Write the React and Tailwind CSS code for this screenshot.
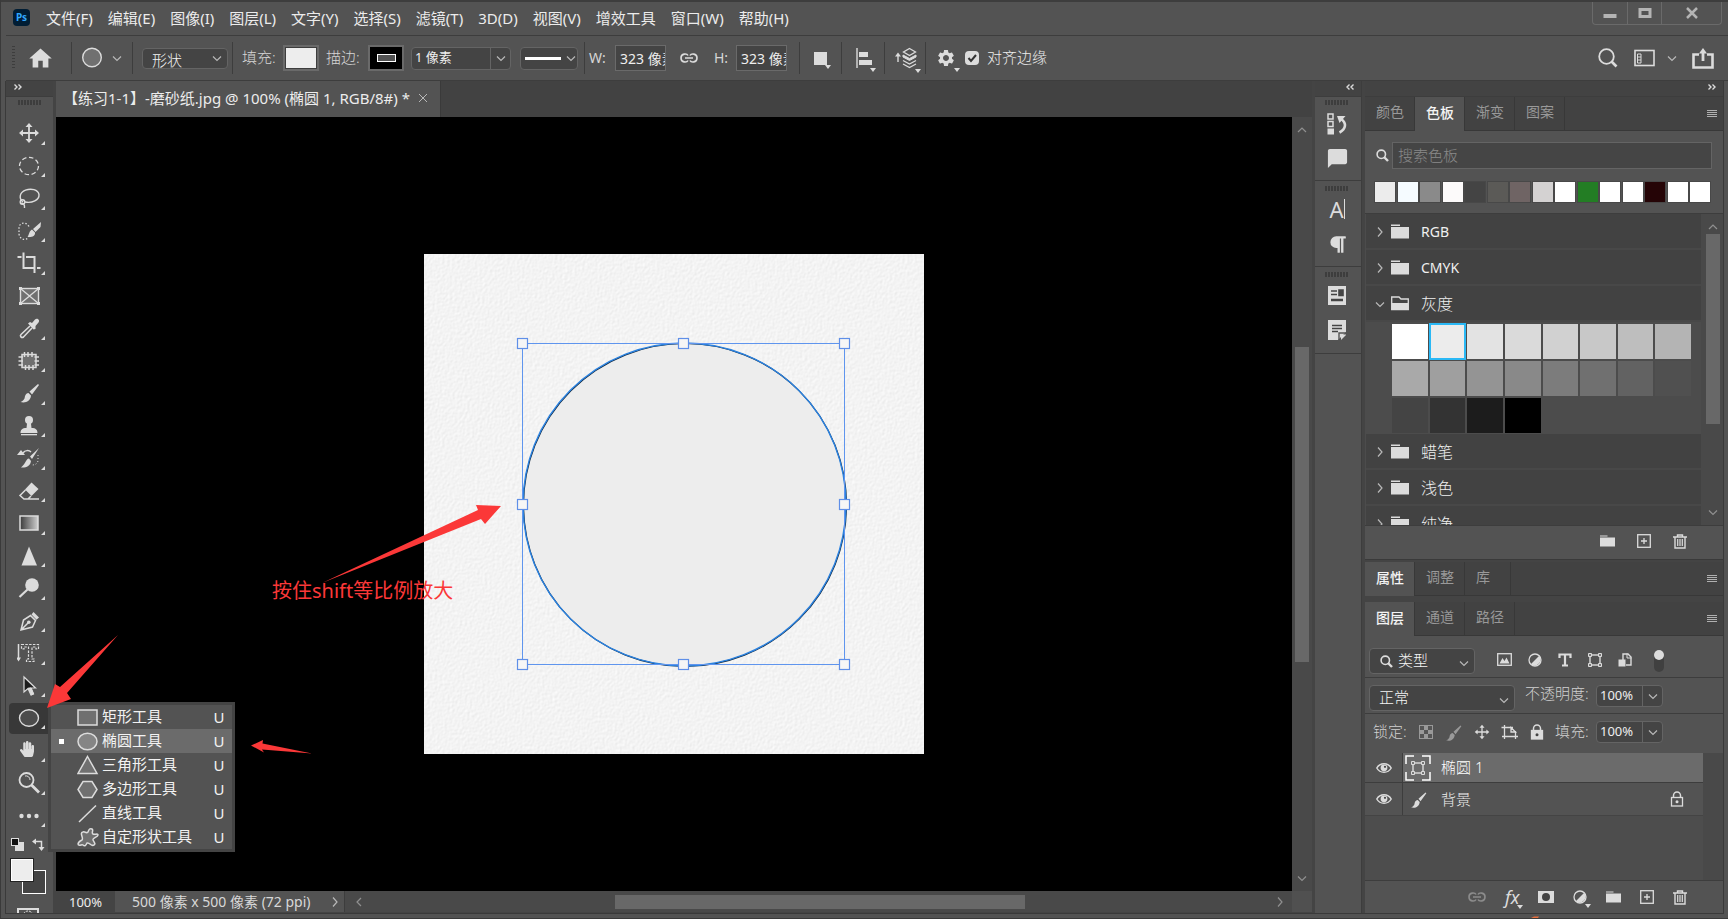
import React from "react";
import { MdHome, MdSettings, MdModeComment } from "react-icons/md";
import { FaHandPaper, FaParagraph } from "react-icons/fa";

const C = "#dcdcdc";

function Icon({ w = 24, h = 24, children, className = "" }) {
  return (
    <svg width={w} height={h} viewBox={`0 0 ${w} ${h}`} fill="none" stroke={C} className={`shrink-0 ${className}`} aria-hidden="true">
      {children}
    </svg>
  );
}

const Chevron = ({ dir = "down", color = "#b8b8b8", className = "" }) => {
  const d = {
    down: "M2 4.5 L6 8.5 L10 4.5",
    up: "M2 8 L6 4 L10 8",
    right: "M4 1.5 L8 6 L4 10.5",
    left: "M8 2 L4 6 L8 10",
  }[dir];
  return (
    <svg width="12" height="12" viewBox="0 0 12 12" fill="none" stroke={color} strokeWidth="1.2" className={`shrink-0 ${className}`} aria-hidden="true">
      <path d={d} />
    </svg>
  );
};

const DoubleChevron = ({ left }) => (
  <svg width="9" height="6" viewBox="0 0 9 6" fill="none" stroke={C} strokeWidth="1.4" aria-hidden="true">
    {left ? <path d="M3.500 0.500 L1 3 L3.500 5.500 M7.500 0.500 L5 3 L7.500 5.500" /> : <path d="M1.500 0.500 L4 3 L1.500 5.500 M5.500 0.500 L8 3 L5.500 5.500" />}
  </svg>
);

const Grip = () => (
  <svg width="24" height="5" viewBox="0 0 24 5" stroke="#3d3d3d" strokeWidth="5" strokeDasharray="2 1" className="mx-auto" aria-hidden="true">
    <path d="M0 2.5 H24" />
  </svg>
);

const brush = "M21 3 L12.5 10.5 L15 13.5 L22 4 Z M11.5 12 C8 12.5 8 15.5 7.500 17.5 C6.500 19.5 5 20.500 3.500 21 C8 22.500 13.500 20.500 14 14.500 Z";

const TOOLS = [
  ["移动工具", <g key="i" strokeWidth="1.800"><path d="M12 4 V20 M4 12 H20" /><path d="M12 2 L15.500 6 H8.500 Z M12 22 L15.500 18 H8.500 Z M2 12 L6 8.500 V15.500 Z M22 12 L18 8.500 V15.500 Z" fill={C} stroke="none" /></g>],
  ["椭圆选框工具", <ellipse key="i" cx="12" cy="12" rx="9.500" ry="8.700" strokeWidth="1.300" strokeDasharray="4.500 2.600" />],
  ["套索工具", <g key="i" strokeWidth="1.400"><path d="M6 16 C1.500 12.500 2.500 6.500 8.500 4.200 C14 2 21 3.500 22 8.500 C22.500 14 15 17.500 8 16" /><circle cx="5.500" cy="16" r="2.300" /><path d="M3.500 17.500 C6 16.500 8 18.500 7.500 22" /></g>],
  ["快速选择工具", <g key="i"><path d="M12 7.500 C9 2.500 3 3.500 2 8 V15 C3 20.500 8 22 12 18.500" strokeWidth="1.300" strokeDasharray="1.500 1.800" /><path d="M24 3 L16 10 L18.500 13 L23.500 8 Z M15 10.500 C12 12 12.500 15 10.500 18 C15 18.500 18.500 17 18 13.500 Z" fill={C} stroke="none" /></g>],
  ["裁剪工具", <g key="i" strokeWidth="2"><path d="M6.500 1.500 V17 H18 M20 17 H23.500 M0.500 6 H4.500 M9 6 H17.500 V22" /></g>],
  ["图框工具", <g key="i"><rect x="3.500" y="4.500" width="18" height="15" fill="#707070" strokeWidth="1.400" /><path d="M3.500 4.500 L21.500 19.500 M21.500 4.500 L3.500 19.500" strokeWidth="1.300" /><path d="M2 3 h3 v3 h-3z M20 3 h3 v3 h-3z M2 18 h3 v3 h-3z M20 18 h3 v3 h-3z" fill={C} stroke="none" /></g>],
  ["吸管工具", <g key="i"><path d="M13 10 L4 18.500 C2.500 20 4.500 22.500 6.500 21 L15 12" strokeWidth="1.600" /><path d="M11 7.500 L13 6 L15 7 L18 3.500 C20 1.500 23.500 4 21.500 6.500 L18.500 10 L18.500 13 L16.500 13.500 Z" fill={C} stroke="none" /></g>],
  ["修补工具", <g key="i" strokeWidth="1.500"><path d="M5 5.500 H19 V18.500 H5 Z" fill="#707070" /><path d="M7.500 3 V8 M11 3 V8 M15 3 V8 M8.500 16 V21 M12 16 V21 M16 16 V21 M1.500 8 H6 M1.500 12 H6 M1.500 16 H6 M17.500 8 H22 M17.500 12 H22 M17.500 16 H22" /></g>],
  ["画笔工具", <path key="i" d={brush} fill={C} stroke="none" />],
  ["仿制图章工具", <g key="i" fill={C} stroke="none"><circle cx="12" cy="6" r="4" /><path d="M10.200 8 H13.800 L14.500 14 C19 14 20.500 16 20.500 19 H3.500 C3.500 16 5 14 9.500 14 Z" /><rect x="4" y="20" width="16" height="1.300" /></g>],
  ["历史记录画笔工具", <g key="i"><path d="M22 2 L13 10.500 L15 13 Z M12 12.500 C8.500 13 9.500 17 4 21.500 C9 22 13.500 20 14 15 Z M0 9 L4 4 L8 9 Z" fill={C} stroke="none" /><path d="M6 7 C8 4 12 4 14 6" strokeWidth="1.500" /><path d="M21 9 V15 C20 18 18 19 15 19" strokeDasharray="1 2" /></g>],
  ["橡皮擦工具", <g key="i"><path d="M14.500 3.500 L21.500 10 L14.500 17 L8 10.500 Z" fill={C} stroke="none" /><path d="M8.500 11 L3 16.500 L7 20 H11 L14 17 M7 20 H22" strokeWidth="1.500" /></g>],
  ["渐变工具", <g key="i"><defs><linearGradient id="toolGradient"><stop offset="0" stopColor="#3a3a3a" /><stop offset="1" stopColor="#cfcfcf" /></linearGradient></defs><rect x="3" y="5" width="18" height="14" fill="url(#toolGradient)" strokeWidth="1.500" /></g>],
  ["锐化工具", <path key="i" d="M12 2.500 L20 21.500 H4.500 Z" fill={C} stroke="none" />],
  ["减淡工具", <g key="i"><circle cx="15" cy="9" r="6.800" fill={C} stroke="none" /><path d="M10.500 13.500 L2.500 21" strokeWidth="2.200" /></g>],
  ["钢笔工具", <g key="i"><path d="M4 21 L6.500 11 L13.500 6.500 L18.500 11.500 L15.500 18 Z M4 21 L11 14" strokeWidth="1.500" /><circle cx="11.800" cy="13.200" r="1.800" fill={C} stroke="none" /><path d="M14.500 5.500 L16.500 3 L22 8.500 L19.500 10.800 Z" fill={C} stroke="none" /></g>],
  ["直排文字蒙版工具", <g key="i"><path d="M1.500 3 V19" strokeWidth="1.500" /><path d="M-1 16.500 H4 L1.500 20.500 Z" fill={C} stroke="none" /><path d="M4.500 3.500 H21.500 V8 H19 V6 H15 V18 H17 V20.500 H9.500 V18 H11.500 V6 H7 V8 H4.500 Z" strokeDasharray="2.500 1.300" strokeWidth="1.200" /></g>],
  ["路径选择工具", <g key="i"><path d="M7 3 V18 L11 14.500 L14 21 L16.500 20 L14 14 H18.500 Z" fill="#1c1c1c" strokeWidth="1.200" /><path d="M11.500 14 L14.500 21 L16.500 20 L14 14 Z" fill={C} /></g>],
  ["椭圆工具", <ellipse key="i" cx="12" cy="12" rx="9.500" ry="8.200" fill="#4c4c4c" strokeWidth="1.400" />],
  ["抓手工具", <FaHandPaper key="i" x="2" y="2" width="20" height="20" color={C} />],
  ["缩放工具", <g key="i"><circle cx="9.500" cy="9" r="7" strokeWidth="1.800" /><path d="M14.500 14 L22 21.500" strokeWidth="2.800" /><path d="M8 5 A4 4 0 0 1 13 9" /></g>],
  ["编辑工具栏", <g key="i" fill={C} stroke="none"><circle cx="4.500" cy="12" r="2.200" /><circle cx="12" cy="12" r="2.200" /><circle cx="19.500" cy="12" r="2.200" /></g>],
];

const MENUS = ["文件(F)", "编辑(E)", "图像(I)", "图层(L)", "文字(Y)", "选择(S)", "滤镜(T)", "3D(D)", "视图(V)", "增效工具", "窗口(W)", "帮助(H)"];

const Sep = () => <div className="h-8 w-px shrink-0 bg-[#3d3d3d]" />;

const Corner = () => (
  <svg width="6" height="4" viewBox="0 0 6 4" className="absolute -right-1 -bottom-1" aria-hidden="true"><path d="M0 0 H6 L3 4 Z" fill={C} /></svg>
);

function Select({ label, value, className = "", children, pad = "pl-[9px]" }) {
  return (
    <div className={`relative shrink-0 rounded-sm border border-[#646464] bg-[#444] ${className}`}>
      {children}
      <select aria-label={label} className={`h-full w-full appearance-none bg-transparent pb-[3px] text-[15px] leading-4 font-light text-[#f4f4f4] outline-none ${pad}`}>
        <option>{value}</option>
      </select>
      <Chevron className="pointer-events-none absolute right-1 bottom-1" />
    </div>
  );
}

function Combo({ id, value, className = "" }) {
  return (
    <div className={`flex shrink-0 rounded-sm border border-[#646464] bg-[#444] ${className}`}>
      <input id={id} aria-label={id} defaultValue={value} className="w-0 min-w-0 flex-1 bg-transparent pl-[3px] text-[13px] text-[#eee] outline-none" />
      <button aria-label="展开" className="flex w-5 items-center justify-center border-l border-[#646464]"><Chevron /></button>
    </div>
  );
}

function MenuBar() {
  return (
    <header className="flex h-[35px] shrink-0 items-start border-t-2 border-[#3d3d3d] pl-3">
      <div className="mt-[7px] flex h-[17px] w-[17px] items-center justify-center rounded bg-[#001d34] text-[10px] font-bold text-[#31a8ff]">Ps</div>
      <nav className="ml-4 flex h-8 items-center gap-[15px] text-[15px] text-[#ececec]">
        {MENUS.map((m) => <button key={m} className="whitespace-nowrap">{m}</button>)}
      </nav>
      <div className="mr-[6px] ml-auto flex h-[23px] rounded-b border border-t-0 border-[#6a6a6a]">
        <button aria-label="最小化" className="flex w-[35px] items-center justify-center border-r border-[#6a6a6a]">
          <Icon w={14} h={12}><path d="M0.500 9 H13.500" stroke="#b4b4b4" strokeWidth="4" /></Icon>
        </button>
        <button aria-label="最大化" className="flex w-[34px] items-center justify-center border-r border-[#6a6a6a]">
          <Icon w={14} h={12}><rect x="2" y="2.500" width="10" height="7" stroke="#b4b4b4" strokeWidth="3" /></Icon>
        </button>
        <button aria-label="关闭" className="flex w-[59px] items-center justify-center">
          <Icon w={14} h={12}><path d="M2 1 L12 11 M12 1 L2 11" stroke="#b4b4b4" strokeWidth="2.500" /></Icon>
        </button>
      </div>
    </header>
  );
}

const LinkIcon = ({ color = C }) => (
  <Icon w={18} h={12}><g stroke={color} strokeWidth="1.600"><path d="M8 3.500 C7 1.500 1 1 1 6 C1 11 7 10.500 8 8.500 M10 3.500 C11 1.500 17 1 17 6 C17 11 11 10.500 10 8.500 M5 6 H13" /></g></Icon>
);

function OptionsBar() {
  return (
    <div className="ml-[5px] flex h-[46px] shrink-0 items-center border-y border-[#3d3d3d] pr-[14px] pl-[6px] text-[15px] text-[#d6d6d6]">
      <svg width="3" height="24" stroke="#3d3d3d" strokeWidth="3" strokeDasharray="1 2" aria-hidden="true"><path d="M1.500 0 V24" /></svg>
      <button aria-label="主页" className="ml-3"><MdHome size={27} color={C} /></button>
      <div className="ml-[17px]"><Sep /></div>
      <button aria-label="椭圆工具预设" className="ml-[9px] flex items-center">
        <Icon w={22} h={22}><circle cx="11" cy="10.500" r="9.300" fill="#707070" strokeWidth="1.400" /></Icon>
      </button>
      <Chevron className="ml-[8px]" />
      <div className="mr-[9px] ml-[9px]"><Sep /></div>
      <Select label="工具模式" value="形状" className="h-[21px] w-[86px]" />
      <div className="mr-[9px] ml-1"><Sep /></div>
      <span className="w-[41px] pb-[2px] font-light">填充:</span>
      <button aria-label="填充颜色" className="h-[26px] w-9 border-2 border-[#6a6a6a] bg-[#ededed] outline-1 -outline-offset-3 outline-[#3d3d3d]" />
      <span className="ml-[7px] w-[42px] pb-[2px] font-light">描边:</span>
      <button aria-label="描边颜色" className="flex h-[26px] w-9 items-center justify-center border-2 border-[#6a6a6a] bg-black">
        <span className="h-2 w-[19px] border border-white bg-[#535353]" />
      </button>
      <Combo id="描边宽度" value="1 像素" className="ml-[7px] h-[23px] w-[100px]" />
      <div className="ml-[9px] flex h-[23px] w-[58px] items-center rounded-sm border border-[#646464] bg-[#444] pl-1">
        <button aria-label="描边类型" className="flex w-full items-center gap-1"><span className="h-[3px] w-9 bg-white" /><Chevron /></button>
      </div>
      <div className="mr-1 ml-[6px]"><Sep /></div>
      <label htmlFor="shape-w" className="w-[26px] text-sm">W:</label>
      <input id="shape-w" defaultValue="323 像素" className="h-[26px] w-[51px] border border-[#6a6a6a] bg-[#444] pl-1 text-sm text-[#eee]" />
      <button aria-label="链接宽高" className="mx-[14px]"><LinkIcon /></button>
      <label htmlFor="shape-h" className="ml-[2px] w-[22px] text-sm">H:</label>
      <input id="shape-h" defaultValue="323 像素" className="h-[26px] w-[51px] border border-[#6a6a6a] bg-[#444] pl-1 text-sm text-[#eee]" />
      <div className="mr-[14px] ml-3"><Sep /></div>
      <button aria-label="路径操作" className="relative size-[13px] bg-[#dcdcdc]"><Corner /></button>
      <div className="mx-[14px]"><Sep /></div>
      <button aria-label="路径对齐方式" className="relative">
        <Icon w={16} h={20}><path d="M1 0 V20" strokeWidth="1.400" /><path d="M3 4 h9 v5 h-9z M3 12 h13 v5 h-13z" fill={C} stroke="none" /></Icon><Corner />
      </button>
      <div className="mr-[10px] ml-3"><Sep /></div>
      <button aria-label="路径排列方式" className="relative">
        <Icon w={22} h={22}><path d="M3 8 V15" strokeWidth="1.400" /><path d="M3 5.500 L6 9.500 H0 Z" fill={C} stroke="none" /><path d="M14.500 1.500 L20.500 5 L14.500 8.500 L8.500 5 Z" strokeWidth="1.300" /><path d="M8 8 L14.500 11.500 L21 8 L21 10 L14.500 13.500 L8 10 Z" fill={C} /><path d="M8 13.500 L14.500 17 L21 13.500 M8 17 L14.500 20.500 L21 17" strokeWidth="1.300" /></Icon><Corner />
      </button>
      <div className="mr-[10px] ml-2"><Sep /></div>
      <button aria-label="设置" className="relative"><MdSettings size={20} color={C} /><Corner /></button>
      <label className="ml-[9px] flex items-center gap-2 font-light whitespace-nowrap text-[#eee]">
        <span className="relative flex size-[14px]">
          <input type="checkbox" defaultChecked className="peer size-[14px] appearance-none rounded-sm bg-[#dcdcdc]" />
          <svg width="14" height="14" viewBox="0 0 14 14" className="pointer-events-none absolute inset-0 hidden peer-checked:block" aria-hidden="true"><path d="M3.500 7 L6 10 L11 4" fill="none" stroke="#333" strokeWidth="2" /></svg>
        </span>
        <span className="pb-[2px]">对齐边缘</span>
      </label>
      <div className="ml-auto flex items-center">
        <button aria-label="搜索"><Icon w={20} h={20}><circle cx="8.500" cy="8.500" r="7.300" strokeWidth="1.800" /><path d="M13.500 13.500 L18.500 18.500" strokeWidth="2.600" /></Icon></button>
        <button aria-label="选择工作区" className="ml-4"><Icon w={21} h={18}><rect x="1" y="1.500" width="19" height="15" strokeWidth="1.600" /><path d="M3.500 5 h3.500 v9 h-3.500z" /><path d="M3.500 8 h3.500 M3.500 11 h3.500" /></Icon></button>
        <Chevron className="ml-[11px]" />
        <button aria-label="共享" className="ml-[14px]"><Icon w={22} h={21}><path d="M7 6.500 H1.500 V19.500 H20.500 V6.500 H15" strokeWidth="2.600" /><path d="M11 13 V5" strokeWidth="2.800" /><path d="M11 0 L15 5.500 H7 Z" fill={C} stroke="none" /></Icon></button>
      </div>
    </div>
  );
}

const FLYOUT = [
  ["矩形工具", <rect key="s" x="1" y="3" width="19" height="15" />],
  ["椭圆工具", <ellipse key="s" cx="10.500" cy="10.500" rx="9.500" ry="8.300" />],
  ["三角形工具", <path key="s" d="M10.500 1.500 L20 18.500 H1 Z" />],
  ["多边形工具", <path key="s" d="M6 2.500 H15 L20 10.500 L15 18.500 H6 L1 10.500 Z" />],
  ["直线工具", <path key="s" d="M2 19 L19 2.500" />],
  ["自定形状工具", <path key="s" d="M6 5 C8 4 9 7 11 5 C12 2 13 1 15 2 C17 3 14 6 16 7 C18 8 21 6 21 8 C21 10 15 11 16 13 C17 15 19 17 17 18 C14 20 13 15 10 16 C9 18 8 20 6 18 C5 17 3 19 1.500 18 C0 16 3 14 5 13 C7 11 2 6 6 5 Z" />],
];

function Flyout() {
  return (
    <div role="menu" className="absolute top-0 left-[39px] z-20 w-[187px] border-[3px] border-[#444] bg-[#535353] text-[15px] text-[#f2f2f2]">
      {FLYOUT.map(([name, shape], i) => (
        <button key={name} role="menuitem" className={`flex h-6 w-full items-center pr-[7px] pl-2 ${i === 1 ? "bg-[#6b6b6b]" : ""}`}>
          <span className={`size-[5px] ${i === 1 ? "bg-white" : ""}`} />
          <Icon w={22} h={21} className="mr-[3px] ml-[13px]"><g fill={i === 1 ? "#858585" : "#707070"} strokeWidth="1.500">{shape}</g></Icon>
          <span className="pb-[2px] whitespace-nowrap">{name}</span>
          <span className="ml-auto w-3 text-center">U</span>
        </button>
      ))}
    </div>
  );
}

function Toolbar() {
  return (
    <aside className="flex w-[47px] shrink-0 flex-col bg-[#535353]">
      <div className="flex h-[15px] shrink-0 items-start bg-[#434343] pt-[3px] pl-[7px]"><DoubleChevron /></div>
      <div className="h-[21px] shrink-0 border-t border-[#3d3d3d] pt-[3px]"><Grip /></div>
      <div className="flex min-h-0 flex-1 flex-col">
        {TOOLS.map(([name, art], i) => (
          <div key={name} className="relative ml-[3px] flex min-h-0 flex-1">
            <button aria-label={name} className={`relative flex w-10 flex-1 items-center rounded-sm pl-2 ${i === 18 ? "my-px bg-[#383838]" : ""}`}>
              <Icon>{art}</Icon>
              {i !== 5 && <svg width="4" height="4" className="absolute right-2 bottom-[5px]" aria-hidden="true"><path d="M4 0 V4 H0 Z" fill={C} /></svg>}
            </button>
            {i === 18 && <Flyout />}
          </div>
        ))}
      </div>
      <div className="h-[81px] shrink-0 overflow-hidden">
        <div className="mt-[6px] flex justify-between pr-2 pl-[5px]">
          <button aria-label="默认前景色和背景色"><Icon w={13} h={13}><path d="M4 4 h9 v9 h-9z" fill={C} stroke="none" /><rect x="0.500" y="0.500" width="7" height="7" fill="#111" /></Icon></button>
          <button aria-label="切换前景色和背景色"><Icon w={13} h={13}><path d="M3 3.500 H9.500 V10" strokeWidth="1.500" /><path d="M0 3.500 L4 0.500 V6.500 Z M9.500 13 L6.500 9 H12.500 Z" fill={C} stroke="none" /></Icon></button>
        </div>
        <div className="grid grid-cols-[12px_12px_12px_1fr] grid-rows-[12px_12px_12px] pt-[7px] pl-1">
          <button aria-label="前景色" className="z-10 col-span-2 col-start-1 row-span-2 row-start-1 border border-[#222] bg-[#ededed] ring-1 ring-white ring-inset" />
          <button aria-label="背景色" className="col-span-2 col-start-2 row-span-2 row-start-2 border border-white bg-[#444]" />
        </div>
        <button aria-label="以快速蒙版模式编辑" className="mt-[14px] ml-[11px] block"><Icon w={22} h={16}><rect x="1" y="1" width="20" height="14" strokeWidth="2" /><circle cx="11" cy="8" r="5" strokeDasharray="2 1" /></Icon></button>
      </div>
    </aside>
  );
}

const HANDLES = [[98, 89], [259, 89], [420, 89], [98, 250], [420, 250], [98, 410], [259, 410], [420, 410]];

function Canvas() {
  return (
    <div className="relative flex min-w-0 flex-1 items-center justify-center overflow-hidden bg-black">
      <svg width="500" height="500" viewBox="0 0 500 500" className="shrink-0 overflow-visible" role="img" aria-label="画布">
        <defs>
          <filter id="paper" x="0" y="0" width="100%" height="100%" colorInterpolationFilters="sRGB">
            <feTurbulence type="fractalNoise" baseFrequency="0.4 0.35" numOctaves="2" seed="4" result="n" />
            <feDiffuseLighting in="n" surfaceScale="0.130" diffuseConstant="1.110" lightingColor="#fdfdfd">
              <feDistantLight azimuth="225" elevation="60" />
            </feDiffuseLighting>
          </filter>
        </defs>
        <rect width="500" height="500" fill="#f3f3f3" />
        <rect width="500" height="500" filter="url(#paper)" />
        <circle cx="261" cy="251" r="161.500" fill="#ededed" stroke="#10283f" strokeWidth="1.200" />
        <circle cx="260.500" cy="250.500" r="161.500" fill="none" stroke="#2b82e0" strokeWidth="1.400" />
        <rect x="98.500" y="89.500" width="322" height="321" fill="none" stroke="#5f95ee" strokeWidth="1" />
        {HANDLES.map(([x, y]) => <rect key={`${x}-${y}`} x={x - 4.5} y={y - 4.5} width="10" height="10" fill="#f6f6f6" stroke="#5f8fe8" strokeWidth="1.200" />)}
        <path d="M77 252 L52 251 L54 256 L-102 329 L57 265 L61 270 Z" fill="#fb3838" />
      </svg>
      <p className="absolute top-[460px] left-[216px] text-xl leading-7 whitespace-nowrap text-[#fb3838]">按住shift等比例放大</p>
      <svg width="64" height="16" viewBox="0 0 64 16" className="absolute top-[622px] left-[194px]" aria-hidden="true"><path d="M1 6.500 L13 1 L12.500 4.500 L62 14.500 L12 10.500 L14 13.500 Z" fill="#fb3838" /></svg>
    </div>
  );
}

function Document() {
  return (
    <main className="flex min-w-0 flex-1 flex-col">
      <div className="flex h-9 shrink-0 bg-[#424242]">
        <div className="flex items-center border-r border-[#3a3a3a] bg-[#535353] pr-3 pb-[2px] pl-[7px] text-[15px] text-[#ececec]">
          <span className="whitespace-nowrap">【练习1-1】-磨砂纸.jpg @ 100% (椭圆 1, RGB/8#) *</span>
          <button aria-label="关闭文档" className="ml-2"><Icon w={10} h={10}><path d="M1 1 L9 9 M9 1 L1 9" stroke="#b8b8b8" /></Icon></button>
        </div>
      </div>
      <div className="flex min-h-0 flex-1">
        <Canvas />
        <div className="flex w-5 shrink-0 flex-col items-center bg-[#494949] py-[7px]">
          <Chevron dir="up" color="#909090" />
          <div className="h-[211px]" />
          <div className="h-[315px] w-[14px] bg-[#686868]" />
          <Chevron color="#909090" className="mt-auto" />
        </div>
      </div>
      <div className="flex h-[22px] shrink-0 items-center border-b border-[#444] bg-[#494949] text-sm text-[#d8d8d8]">
        <input aria-label="缩放比例" defaultValue="100%" className="h-full w-[59px] bg-[#444] pl-[13px] text-[13px] text-[#eee]" />
        <div className="flex h-full w-[230px] items-center justify-between border-r border-[#3d3d3d] bg-[#535353] pr-[3px] pl-[17px]">
          <span className="whitespace-nowrap">500 像素 x 500 像素 (72 ppi)</span><Chevron dir="right" />
        </div>
        <Chevron dir="left" color="#909090" className="ml-2" />
        <div className="flex flex-1 justify-center"><div className="h-[14px] w-[410px] bg-[#686868]" /></div>
        <Chevron dir="right" color="#909090" className="mr-[6px]" />
        <div className="h-full w-5 bg-[#505050]" />
      </div>
    </main>
  );
}

function DockStrip() {
  return (
    <aside className="flex w-[47px] shrink-0 flex-col border-r border-[#3d3d3d] bg-[#535353]">
      <div className="flex h-[15px] items-start justify-end bg-[#434343] pt-[3px] pr-[6px]"><DoubleChevron left /></div>
      <div className="flex h-[85px] flex-col items-center border-y border-[#3d3d3d] pt-[3px] pr-[2px]">
        <Grip />
        <button aria-label="历史记录" className="mt-2"><Icon w={20} h={22}><path d="M1 1 h5 v5 h-5z M1 8.500 h5 v5 h-5z" strokeWidth="1.500" /><path d="M0.500 15.500 h6.500 v6 h-6.500z" fill={C} stroke="none" /><path d="M14 6 C20 10 19 16 12.500 19.500" strokeWidth="2.600" /><path d="M10 3 L18.500 3 L12.500 10 Z" fill={C} stroke="none" /></Icon></button>
        <button aria-label="注释" className="mt-3"><MdModeComment size={23} color={C} className="-scale-x-100" /></button>
      </div>
      <div className="flex h-[86px] flex-col items-center border-b border-[#3d3d3d] pt-[5px] pr-[2px]">
        <Grip />
        <button aria-label="字符" className="mt-[6px] flex h-6 items-center text-[22px] leading-6 text-[#dcdcdc]">A<span className="h-5 w-px bg-[#dcdcdc]" /></button>
        <button aria-label="段落" className="mt-[14px]"><FaParagraph size={19} color={C} /></button>
      </div>
      <div className="flex h-[87px] flex-col items-center border-b border-[#3d3d3d] pt-[5px] pr-[2px]">
        <Grip />
        <button aria-label="属性面板" className="mt-[9px]"><Icon w={18} h={19}><rect x="0.500" y="0.500" width="17" height="18" fill={C} /><path d="M3 5 H9 M3 8.500 H9 M11 4 h4 v5.500 h-4z" stroke="#444" strokeWidth="1.600" fill="#444" /><path d="M3 14 H15" stroke="#444" strokeWidth="2.500" /></Icon></button>
        <button aria-label="注释面板" className="mt-[15px]"><Icon w={18} h={20}><path d="M0 0 H18 V12 L10 20 H0 Z" fill={C} stroke="none" /><path d="M4 5.500 H14 M4 8.500 H14 M4 11.500 H10" stroke="#444" strokeWidth="1.300" /><path d="M18 13 H11 V20" stroke="#535353" strokeWidth="1.400" /><path d="M13 20 L18 15 V14.500 H13 Z" fill={C} stroke="none" /></Icon></button>
      </div>
    </aside>
  );
}

const Burger = () => <Icon w={10} h={8}><path d="M0 0.500 H10 M0 2.500 H10 M0 4.500 H10 M0 6.500 H10" stroke="#b0b0b0" strokeWidth="1" /></Icon>;

function Tabs({ items, active }) {
  return (
    <div role="tablist" className="flex h-[34px] shrink-0 items-stretch bg-[#424242] text-sm">
      {items.map((t, i) => (
        <button key={t} role="tab" aria-selected={i === active} className={`border-r border-[#383838] pb-[3px] pl-[11px] ${i === active ? "bg-[#535353] font-medium text-[#f4f4f4]" : "border-b text-[#999]"} ${t.length === 1 ? "pr-5" : "pr-[10px]"}`}>{t}</button>
      ))}
      <div className="flex flex-1 items-center justify-end border-b border-[#383838] pr-[6px]"><button aria-label="面板菜单"><Burger /></button></div>
    </div>
  );
}

const Folder = ({ open, w = 18, h = 15 }) => (
  <svg width={w} height={h} viewBox="0 0 18 15" preserveAspectRatio="none" className="shrink-0" aria-hidden="true">
    {open ? <><path d="M0.700 13.500 V1 H8 L10 3 H17.300 V13.500 Z" fill="#444" stroke={C} strokeWidth="1.300" /><path d="M0.500 7 H17.500 V14 H0.500 Z" fill={C} /></> : <><path d="M0 0.500 H9 V2 H0 Z M0 3 H18 V14.500 H0 Z" fill={C} /></>}
  </svg>
);
const Plus = () => <Icon w={14} h={14}><rect x="0.700" y="0.700" width="12.600" height="12.600" strokeWidth="1.300" /><path d="M7 4 V10 M4 7 H10" strokeWidth="1.300" /></Icon>;
const Trash = () => <Icon w={14} h={15}><path d="M0 3 H14 M4.500 3 V1 H9.500 V3 M2 3 V14 H12 V3" strokeWidth="1.400" /><path d="M4.700 5 V12 M7 5 V12 M9.300 5 V12" strokeWidth="1.200" /></Icon>;
const Magnifier = ({ className }) => <Icon w={13} h={13} className={className}><circle cx="5.300" cy="5.300" r="4.200" strokeWidth="1.600" /><path d="M8 8 L12 12" strokeWidth="2.400" /></Icon>;
const Adjust = () => <Icon w={14} h={14}><circle cx="7" cy="7" r="6" strokeWidth="1.300" /><path d="M11.200 2.800 A6 6 0 0 1 2.800 11.200 Z" fill={C} stroke="none" /></Icon>;
const ShapeBox = () => <Icon w={14} h={14}><rect x="2" y="2" width="10" height="10" strokeWidth="1.400" /><path d="M0.500 0.500 h3 v3 h-3z M10.500 0.500 h3 v3 h-3z M0.500 10.500 h3 v3 h-3z M10.500 10.500 h3 v3 h-3z" fill="#777" strokeWidth="1" /></Icon>;

const RECENT = ["bg-[#ececec]", "bg-[#f5fbff]", "bg-[#8a8a8a]", "bg-[#fcfafa]", "bg-[#444]", "bg-[#5b5a57]", "bg-[#6f6464]", "bg-[#d4d2d2]", "bg-white", "bg-[#237d24]", "bg-white", "bg-white", "bg-[#250406]", "bg-white", "bg-white"];
const GRAYS = ["bg-white", "bg-[#ececec]", "bg-[#e3e3e3]", "bg-[#dadada]", "bg-[#d1d1d1]", "bg-[#c8c8c8]", "bg-[#bebebe]", "bg-[#b4b4b4]", "bg-[#a9a9a9]", "bg-[#9f9f9f]", "bg-[#949494]", "bg-[#898989]", "bg-[#7c7c7c]", "bg-[#707070]", "bg-[#626262]", "bg-[#505050]", "bg-[#444]", "bg-[#333]", "bg-[#1c1c1c]", "bg-black"];

const Group = ({ name, open }) => (
  <button aria-expanded={!!open} className="flex h-9 w-full shrink-0 items-center border-b-2 border-[#484848] bg-[#424242] pt-px pl-2 text-[#f0f0f0]">
    <Chevron dir={open ? "down" : "right"} />
    <span className="mr-3 ml-[5px] flex"><Folder open={open} /></span>
    <span className={/^[A-Z]/.test(name) ? "text-sm" : "text-base font-light"}>{name}</span>
  </button>
);

function SwatchesPanel() {
  return (
    <section className="flex shrink-0 flex-col border-b border-[#3a3a3a] bg-[#535353]">
      <Tabs items={["颜色", "色板", "渐变", "图案"]} active={1} />
      <label className="flex items-center gap-[3px] pt-[11px] pr-[11px] pl-[11px]">
        <Magnifier />
        <input placeholder="搜索色板" className="h-[27px] min-w-0 flex-1 border border-[#646464] bg-[#454545] pb-px pl-[5px] text-[15px] font-light placeholder:text-[#8a8a8a]" />
      </label>
      <div className="mt-[13px] mb-[11px] flex justify-between pr-[13px] pl-[10px]">
        {RECENT.map((c, i) => <button key={i} aria-label={`最近使用 ${i + 1}`} className={`size-5 outline-1 outline-[#484848] ${c}`} />)}
      </div>
      <div className="flex h-[312px] border-t border-[#3d3d3d] bg-[#4c4c4c] pl-px">
        <div className="flex min-w-0 flex-1 flex-col overflow-hidden">
          <Group name="RGB" /><Group name="CMYK" /><Group name="灰度" open />
          <div className="grid shrink-0 grid-cols-8 gap-x-[2px] gap-y-[2px] pt-[2px] pr-[10px] pb-px pl-[26px]">
            {GRAYS.map((c, i) => <button key={i} aria-label={`灰度 ${i + 1}`} className={`h-[35px] ${i === 1 ? "outline-2 -outline-offset-1 outline-[#2ab8f5]" : ""} ${c}`} />)}
          </div>
          <Group name="蜡笔" /><Group name="浅色" /><Group name="纯净" />
        </div>
        <div className="flex w-[22px] shrink-0 flex-col items-center bg-[#494949] py-[7px] pl-px">
          <Chevron dir="up" color="#909090" />
          <div className="mt-px h-[190px] w-[14px] bg-[#686868]" />
          <Chevron color="#909090" className="mt-auto" />
        </div>
      </div>
      <div className="flex h-[34px] items-center justify-end gap-[22px] border-t border-[#3d3d3d] pr-9 pb-[3px]">
        <button aria-label="新建组"><Folder w={15} h={12} /></button>
        <button aria-label="新建色板"><Plus /></button>
        <button aria-label="删除色板"><Trash /></button>
      </div>
    </section>
  );
}

const Eye = () => <Icon w={16} h={12}><path d="M0.800 6 C4 0.300 12 0.300 15.200 6 C12 11.700 4 11.700 0.800 6 Z" strokeWidth="1.500" /><circle cx="8" cy="5.800" r="3.400" fill={C} stroke="none" /><circle cx="9" cy="4.800" r="1.100" fill="#444" stroke="none" /></Icon>;
const LockIcon = ({ filled }) => <Icon w={14} h={16}><path d="M3.500 7 V4.500 A3.500 3.500 0 0 1 10.500 4.500 V7" strokeWidth="1.500" /><rect x="1.500" y="6.500" width="11" height="8.500" fill={filled ? C : "none"} strokeWidth="1.300" /><circle cx="7" cy="10.700" r="1.500" fill={filled ? "#444" : C} stroke="none" /></Icon>;
const BrushSmall = ({ color = C }) => <svg width="19" height="19" viewBox="1 0 23 23" aria-hidden="true"><path d={brush} fill={color} /></svg>;

function LayersPanel() {
  return (
    <section className="flex min-h-0 flex-1 flex-col bg-[#535353] text-[15px] text-[#d0d0d0]">
      <Tabs items={["图层", "通道", "路径"]} active={0} />
      <div className="flex h-[42px] shrink-0 items-center border-b border-[#3d3d3d] pt-2 pl-1">
        <Select label="图层过滤" value="类型" pad="pl-7" className="h-[26px] w-[106px]"><Magnifier className="absolute top-[6px] left-[10px]" /></Select>
        <div className="ml-[22px] flex items-center gap-4 pb-[2px]">
          <button aria-label="像素图层"><Icon w={15} h={13}><rect x="0.700" y="0.700" width="13.600" height="11.600" strokeWidth="1.300" /><path d="M2.500 10.500 L5.500 5 L7.500 8 L9.500 4.500 L12.500 10.500 Z" fill={C} stroke="none" /></Icon></button>
          <button aria-label="调整图层"><Adjust /></button>
          <button aria-label="文字图层"><Icon w={14} h={14}><path d="M1.500 5 V1.500 H12.500 V5 M7 1.500 V12.500 M4 12.500 H10" strokeWidth="2.200" /></Icon></button>
          <button aria-label="形状图层"><ShapeBox /></button>
          <button aria-label="智能对象"><Icon w={14} h={14}><path d="M5 7 V1 H10 L13 4 V12 H8" strokeWidth="1.400" /><path d="M0.500 6.500 h7 v7 h-7z" fill={C} stroke="none" /><path d="M9 0.500 V5 H13.500" /></Icon></button>
        </div>
        <button aria-label="打开或关闭图层过滤" className="ml-[22px] flex h-[22px] w-[10px] items-start rounded-full bg-[#404040]"><span className="block size-[10px] rounded-full bg-[#dcdcdc]" /></button>
      </div>
      <div className="flex h-9 shrink-0 items-center border-b border-[#3d3d3d] pl-1">
        <Select label="混合模式" value="正常" className="mt-1 h-[26px] w-[146px]" />
        <label htmlFor="不透明度" className="ml-[10px] w-[71px] pb-1 font-light whitespace-nowrap">不透明度:</label>
        <Combo id="不透明度" value="100%" className="h-[22px] w-[67px]" />
      </div>
      <div className="flex h-[39px] shrink-0 items-center pb-[3px] pl-2">
        <span className="w-[46px] pb-[2px] font-light">锁定:</span>
        <div className="flex items-center gap-[11px]">
          <button aria-label="锁定透明像素"><Icon w={14} h={14}><rect width="14" height="14" fill="#999" stroke="none" /><path d="M1 1h4v4h-4z M9 1h4v4h-4z M5 5h4v4h-4z M1 9h4v4h-4z M9 9h4v4h-4z" fill="#555" stroke="none" /></Icon></button>
          <button aria-label="锁定图像像素"><BrushSmall color="#999" /></button>
          <button aria-label="锁定位置"><svg width="16" height="16" viewBox="1 1 22 22" fill="none" stroke={C} aria-hidden="true">{TOOLS[0][1]}</svg></button>
          <button aria-label="防止自动嵌套"><Icon w={18} h={14}><path d="M3.500 0 V14 M0.500 2.500 H12 M1 11.500 H17 M14.500 6 V14 M10 2.500 L14.500 7 H10 Z" strokeWidth="1.300" /></Icon></button>
          <button aria-label="锁定全部"><LockIcon filled /></button>
        </div>
        <label htmlFor="填充" className="ml-auto w-[41px] pb-[2px] font-light">填充:</label>
        <Combo id="填充" value="100%" className="mr-[60px] h-[22px] w-[67px]" />
      </div>
      <div className="flex min-h-0 flex-1 bg-[#4d4d4d]">
        <ul className="flex-1">
          <li className="flex h-[30px] border-b border-[#3d3d3d] bg-[#535353]">
            <button aria-label="隐藏 椭圆 1" className="flex w-[38px] items-center justify-center border-r border-[#3d3d3d]"><Eye /></button>
            <div className="flex flex-1 items-center bg-[#6b6b6b] pl-[2px] font-light text-white">
              <span className="relative flex size-[26px] items-center justify-center">
                <svg width="26" height="26" className="absolute inset-0" fill="none" stroke="white" strokeWidth="1.500" aria-hidden="true"><path d="M1 9 V1 H9 M17 1 H25 V9 M25 17 V25 H17 M9 25 H1 V17" /></svg><ShapeBox />
              </span>
              <span className="ml-[10px]">椭圆 1</span>
            </div>
          </li>
          <li className="flex h-[33px] border-b border-[#444] bg-[#535353]">
            <button aria-label="隐藏 背景" className="flex w-[38px] items-center justify-center border-r border-[#3d3d3d]"><Eye /></button>
            <div className="flex flex-1 items-center pr-[19px] pl-[6px] font-light text-[#eee]"><BrushSmall /><span className="ml-[13px]">背景</span><span className="ml-auto"><LockIcon /></span></div>
          </li>
        </ul>
        <div className="w-5 shrink-0 bg-[#494949]" />
      </div>
      <div className="flex h-[33px] shrink-0 items-center justify-end gap-[19px] border-t border-[#3d3d3d] pr-9">
        <button aria-label="链接图层"><LinkIcon color="#8c8c8c" /></button>
        <button aria-label="图层样式" className="relative w-[14px] text-lg leading-4 text-[#dcdcdc] italic">fx<Corner /></button>
        <button aria-label="添加图层蒙版"><Icon w={16} h={12}><rect width="16" height="12" fill={C} stroke="none" /><circle cx="8" cy="6" r="4" fill="#444" stroke="none" /></Icon></button>
        <button aria-label="新建调整图层" className="relative"><Adjust /><Corner /></button>
        <button aria-label="新建图层组"><Folder w={15} h={12} /></button>
        <button aria-label="新建图层"><Plus /></button>
        <button aria-label="删除图层"><Trash /></button>
      </div>
    </section>
  );
}

export default function App() {
  return (
    <div className="relative flex h-screen min-h-[700px] w-full flex-col overflow-hidden border-l border-[#3a3a3a] bg-[#535353] font-['Noto_Sans','Noto_Sans_CJK_SC',sans-serif]">
      <MenuBar />
      <OptionsBar />
      <div className="mx-[4px] flex min-h-0 flex-1 gap-[3px] border-x border-b border-[#3a3a3a] bg-[#444]">
        <Toolbar />
        <Document />
        <DockStrip />
        <aside className="flex w-[358px] shrink-0 flex-col">
          <div className="flex h-4 shrink-0 items-start justify-end border-b border-[#3d3d3d] bg-[#434343] pt-[3px] pr-[7px]"><DoubleChevron /></div>
          <SwatchesPanel />
          <div className="mt-[2px] mb-[6px] shrink-0"><Tabs items={["属性", "调整", "库"]} active={0} /></div>
          <LayersPanel />
        </aside>
      </div>
      <footer className="flex h-[5px] shrink-0 items-end justify-end border-b border-[#3a3a3a] pr-[189px]">
        <svg width="8" height="2" viewBox="0 0 8 2" aria-hidden="true"><path d="M0 2 L3 0.500 H8 L7 2 Z" fill="#e8703f" /></svg>
      </footer>
      <svg width="72" height="76" viewBox="0 0 72 76" className="absolute top-[634px] left-[46px] z-30" aria-hidden="true"><path d="M0 74 L8 50 L13 53 L71 1 L20 59 L24 65 Z" fill="#fb3838" /></svg>
    </div>
  );
}
